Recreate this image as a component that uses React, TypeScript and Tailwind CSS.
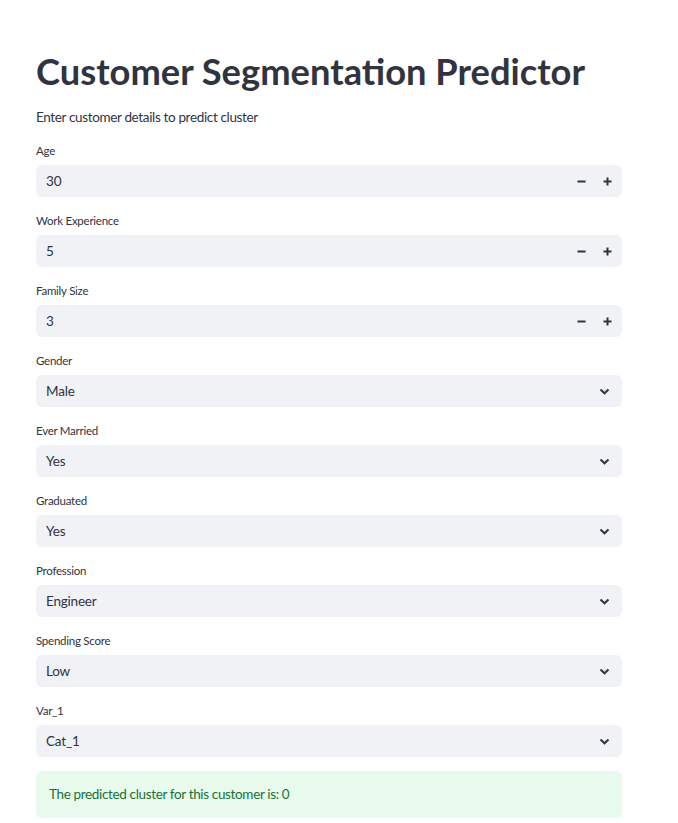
import React from "react";

const font = { fontFamily: 'Lato, "Noto Sans", sans-serif' };

function Label({ text }: { text: string }) {
  return <div className="h-5 text-[11.5px] leading-5 tracking-[-0.25px] text-[#31333F] mb-1">{text}</div>;
}

function NumberField({ label, value }: { label: string; value: string }) {
  return (
    <div>
      <Label text={label} />
      <div className="h-8 rounded-md bg-[#F0F2F6] flex items-center">
        <div className="flex-1 pl-[10px] text-[13.5px] tracking-[-0.2px] text-[#31333F]">{value}</div>
        <div className="flex items-center h-full pr-[2px]">
          <div className="w-[26px] h-full flex items-center justify-center">
            <svg width="9" height="9" viewBox="0 0 9 9">
              <rect x="0.5" y="3.5" width="8" height="2" fill="#31333F" />
            </svg>
          </div>
          <div className="w-[26px] h-full flex items-center justify-center">
            <svg width="9" height="9" viewBox="0 0 9 9">
              <rect x="0.5" y="3.5" width="8" height="2" fill="#31333F" />
              <rect x="3.5" y="0.5" width="2" height="8" fill="#31333F" />
            </svg>
          </div>
        </div>
      </div>
    </div>
  );
}

function SelectField({ label, value }: { label: string; value: string }) {
  return (
    <div>
      <Label text={label} />
      <div className="h-8 rounded-md bg-[#F0F2F6] flex items-center">
        <div className="flex-1 pl-[10px] text-[13.5px] tracking-[-0.2px] text-[#31333F]">{value}</div>
        <div className="pr-[12px] flex items-center">
          <svg width="11" height="7" viewBox="0 0 11 7">
            <path d="M1.5 1.5 L5.5 5.3 L9.5 1.5" fill="none" stroke="#31333F" strokeWidth="2" />
          </svg>
        </div>
      </div>
    </div>
  );
}

export default function App() {
  return (
    <div className="min-h-[823px] bg-white" style={font}>
      <div className="w-[586px] ml-[36px] pt-[50px] flex flex-col gap-[14px]">
        <div>
          <h1 className="text-[36.3px] leading-[44px] font-bold text-[#31333F] -mt-[1px]">
            Customer Segmentation Predictor
          </h1>
          <p className="mt-[14px] text-[13.5px] leading-5 tracking-[-0.35px] text-[#31333F]">
            Enter customer details to predict cluster
          </p>
        </div>
        <NumberField label="Age" value="30" />
        <NumberField label="Work Experience" value="5" />
        <NumberField label="Family Size" value="3" />
        <SelectField label="Gender" value="Male" />
        <SelectField label="Ever Married" value="Yes" />
        <SelectField label="Graduated" value="Yes" />
        <SelectField label="Profession" value="Engineer" />
        <SelectField label="Spending Score" value="Low" />
        <SelectField label="Var_1" value="Cat_1" />
        <div className="h-[47px] rounded-md bg-[#E8F9EE] flex items-center pl-[13px] text-[13.5px] tracking-[-0.35px] text-[#177233]">
          The predicted cluster for this customer is: 0
        </div>
      </div>
    </div>
  );
}
